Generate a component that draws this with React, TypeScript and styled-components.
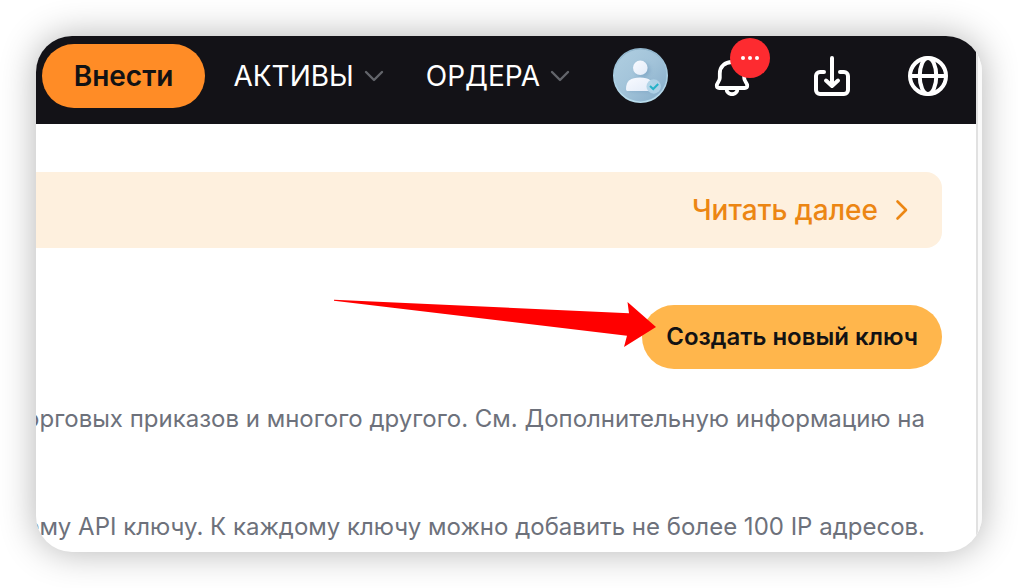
import React from "react";
import styled, { createGlobalStyle } from "styled-components";

const GlobalStyle = createGlobalStyle`
  *, *::before, *::after { box-sizing: border-box; }
  body {
    margin: 0;
    background: #fff;
    font-family: Inter, "Liberation Sans", sans-serif;
  }
`;

const Stage = styled.div`
  padding: 36px;
  overflow: hidden;
`;

const Frame = styled.div`
  display: flex;
  border-radius: 36px;
  overflow: hidden;
  background: #fff;
  box-shadow: 0 0 36px rgba(0, 0, 0, 0.3);
`;

const Page = styled.div`
  flex: 1;
  min-width: 0;
  overflow: hidden;
`;

const ScrollTrack = styled.div`
  flex: none;
  width: 6px;
  background: #fafafa;
  border-left: 2px solid #e1e1e1;
`;

const Header = styled.header`
  display: flex;
  justify-content: flex-end;
  align-items: center;
  padding: 8px 28px 16px 6px;
  background: #131217;
`;

const PillButton = styled.button<{ $tone: string; $size: number; $pad: number }>`
  flex: none;
  height: 64px;
  padding: 0 ${(p) => p.$pad}px;
  border: 0;
  border-radius: 32px;
  background: ${(p) => p.$tone};
  color: #121214;
  font: 600 ${(p) => p.$size}px/32px Inter, "Liberation Sans", sans-serif;
  white-space: nowrap;
  cursor: pointer;
`;

const Nav = styled.nav`
  display: flex;
  gap: 41px;
  margin: 0 41px 0 28px;
`;

const NavButton = styled.button`
  display: flex;
  align-items: center;
  gap: 9px;
  padding: 0;
  border: 0;
  background: none;
  color: #fff;
  font: 400 28px/32px Inter, "Liberation Sans", sans-serif;
  white-space: nowrap;
  cursor: pointer;
`;

const Tools = styled.div`
  display: flex;
  align-items: center;
`;

const IconButton = styled.button<{ $gap?: number }>`
  position: relative;
  display: flex;
  flex: none;
  margin-left: ${(p) => p.$gap ?? 0}px;
  padding: 0;
  border: 0;
  background: none;
  color: #fff;
  cursor: pointer;
`;

const Badge = styled.span`
  position: absolute;
  top: -18px;
  right: -18px;
  display: flex;
  align-items: center;
  justify-content: center;
  gap: 3px;
  width: 40px;
  height: 40px;
  border-radius: 50%;
  background: #fd2b30;
`;

const Dot = styled.i`
  width: 4px;
  height: 4px;
  border-radius: 50%;
  background: #fff;
`;

const Main = styled.main`
  padding: 48px 34px 7px 0;
`;

const Banner = styled.section`
  display: flex;
  justify-content: flex-end;
  align-items: center;
  height: 76px;
  padding-right: 30px;
  border-radius: 0 16px 16px 0;
  background: #fef0de;
`;

const MoreLink = styled.a`
  display: flex;
  align-items: center;
  gap: 14px;
  color: #ec8613;
  font-size: 28px;
  font-weight: 500;
  line-height: 32px;
  text-decoration: none;
  white-space: nowrap;
`;

const Actions = styled.div`
  display: flex;
  justify-content: flex-end;
  margin: 57px 0 32px;
`;

const ActionAnchor = styled.div`
  position: relative;
`;

const Pointer = styled.svg`
  position: absolute;
  top: -6px;
  right: 285px;
  pointer-events: none;
`;

const Note = styled.p`
  display: flex;
  justify-content: flex-end;
  margin: 0;
  padding-right: 17px;
  color: #6d717b;
  font-size: 24px;
  line-height: 36px;
  white-space: nowrap;

  & + & {
    margin-top: 72px;
  }
`;

const Chevron = () => (
  <svg width="22" height="16" viewBox="0 0 22 16" fill="none" aria-hidden="true">
    <path d="M3 4l8 8 8-8" stroke="#63656b" strokeWidth="2.4" strokeLinecap="round" strokeLinejoin="round" />
  </svg>
);

const Avatar = () => (
  <svg width="56" height="56" viewBox="0 0 56 56" aria-hidden="true">
    <defs>
      <linearGradient id="disc" x1="0" y1="0" x2="1" y2="1">
        <stop offset="0" stopColor="#b0cfe1" />
        <stop offset="0.5" stopColor="#a2c3d9" />
        <stop offset="1" stopColor="#84abc8" />
      </linearGradient>
      <linearGradient id="rim" x1="0" y1="0" x2="0" y2="1">
        <stop offset="0" stopColor="#8fb3ca" />
        <stop offset="0.5" stopColor="#a9cde2" />
        <stop offset="1" stopColor="#b9dcec" />
      </linearGradient>
      <linearGradient id="figure" x1="0" y1="0" x2="1" y2="1">
        <stop offset="0" stopColor="#f8faff" />
        <stop offset="1" stopColor="#e2ebf8" />
      </linearGradient>
      <filter id="soft" x="-50%" y="-50%" width="200%" height="200%">
        <feGaussianBlur stdDeviation="2" />
      </filter>
    </defs>
    <circle cx="28.5" cy="27.5" r="26.7" fill="url(#disc)" stroke="url(#rim)" strokeWidth="1.6" />
    <g fill="#6f9abc" opacity="0.6" filter="url(#soft)">
      <circle cx="31" cy="22" r="7" />
      <path d="M16 43c0-8 5-12 13-12s14 4 14 12z" />
    </g>
    <circle cx="28.3" cy="19.8" r="7.3" fill="url(#figure)" />
    <path d="M14 41c0-8 4.500-11.500 14-11.500S41.500 33 41.500 41c0 1.500-.5 2-2 2H16c-1.500 0-2-.5-2-2z" fill="url(#figure)" />
    <circle cx="41.7" cy="38.5" r="7.2" fill="#b0d3e7" fillOpacity="0.95" />
    <path d="M38 38l3.200 3 5-5" fill="none" stroke="#25b2c8" strokeWidth="2" />
  </svg>
);

const Bell = () => (
  <svg width="40" height="40" viewBox="0 0 40 40" fill="none" stroke="currentColor" strokeWidth="3.8" strokeLinejoin="round" aria-hidden="true">
    <path d="M7.800 22v-4.500C7.800 10.500 13 6 20 6s12.200 4.500 12.200 11.500V22c0 3.300 3 5 3 7.500 0 1.500-.8 2.500-2.400 2.500H7.200c-1.600 0-2.400-1-2.400-2.500 0-2.500 3-4.200 3-7.500z" />
    <path d="M14.500 32.500c0 3.700 2.500 5.700 5.500 5.700s5.500-2 5.500-5.700" />
  </svg>
);

const Download = () => (
  <svg width="40" height="40" viewBox="0 0 40 40" fill="none" stroke="currentColor" strokeWidth="4" strokeLinecap="round" strokeLinejoin="round" aria-hidden="true">
    <path d="M12 16H8a4 4 0 0 0-4 4v14a4 4 0 0 0 4 4h24a4 4 0 0 0 4-4V20a4 4 0 0 0-4-4h-4" />
    <path d="M20 2v27M14 24.500l6 5.500 6-5.500" />
  </svg>
);

const Globe = () => (
  <svg width="40" height="40" viewBox="0 0 40 40" fill="none" stroke="currentColor" strokeWidth="4" aria-hidden="true">
    <circle cx="20" cy="20" r="18" />
    <ellipse cx="20" cy="20" rx="8.3" ry="18" />
    <path d="M2 20h36" />
  </svg>
);

export default function App() {
  return (
    <>
      <GlobalStyle />
      <Stage>
        <Frame>
          <Page>
            <Header>
              <PillButton $tone="#ff8c26" $size={28} $pad={32}>Внести</PillButton>
              <Nav>
                <NavButton>АКТИВЫ<Chevron /></NavButton>
                <NavButton>ОРДЕРА<Chevron /></NavButton>
              </Nav>
              <Tools>
                <IconButton aria-label="Профиль"><Avatar /></IconButton>
                <IconButton aria-label="Уведомления" $gap={44}>
                  <Bell />
                  <Badge><Dot /><Dot /><Dot /></Badge>
                </IconButton>
                <IconButton aria-label="Скачать" $gap={60}><Download /></IconButton>
                <IconButton aria-label="Язык" $gap={56}><Globe /></IconButton>
              </Tools>
            </Header>
            <Main>
              <Banner>
                <MoreLink href="#more">
                  Читать далее
                  <svg width="20" height="24" viewBox="0 0 20 24" fill="none" aria-hidden="true">
                    <path d="M5.500 3.500l8.500 8.500-8.500 8.500" stroke="currentColor" strokeWidth="2.6" strokeLinecap="round" strokeLinejoin="round" />
                  </svg>
                </MoreLink>
              </Banner>
              <Actions>
                <ActionAnchor>
                  <PillButton $tone="#ffb64c" $size={24} $pad={24}>Создать новый ключ</PillButton>
                  <Pointer width="324" height="50" viewBox="0 0 324 50" aria-hidden="true">
                    <path d="M1 .8L296 14.200 294.500 3 323 28 291 48 294 36.700 1 1.800z" fill="#f00" />
                  </Pointer>
                </ActionAnchor>
              </Actions>
              <Note>орговых приказов и многого другого. См. Дополнительную информацию на</Note>
              <Note>ему API ключу. К каждому ключу можно добавить не более 100 IP адресов.</Note>
            </Main>
          </Page>
          <ScrollTrack />
        </Frame>
      </Stage>
    </>
  );
}
